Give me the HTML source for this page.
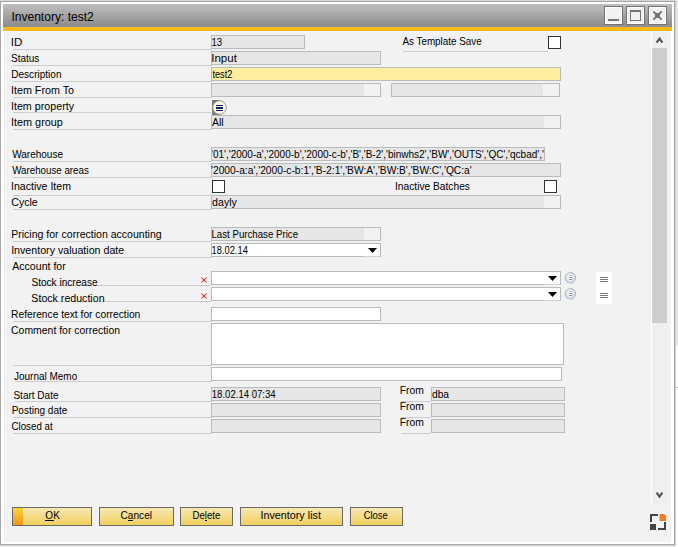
<!DOCTYPE html>
<html><head><meta charset="utf-8"><style>
html,body{margin:0;padding:0;width:678px;height:547px;overflow:hidden;background:#d6d6d6}
svg{display:block}
text{font-family:"Liberation Sans",sans-serif}
</style></head><body>
<svg width="678" height="547" viewBox="0 0 678 547" shape-rendering="crispEdges">
<defs><linearGradient id="tg" x1="0" y1="0" x2="0" y2="1"><stop offset="0" stop-color="#c0c0c0"/><stop offset="1" stop-color="#8c8c8c"/></linearGradient><linearGradient id="bg" x1="0" y1="0" x2="0" y2="1"><stop offset="0" stop-color="#f8e8b4"/><stop offset="1" stop-color="#f0d05c"/></linearGradient><linearGradient id="og" x1="0" y1="0" x2="0" y2="1"><stop offset="0" stop-color="#fcd23a"/><stop offset="1" stop-color="#f2961a"/></linearGradient><radialGradient id="cg" cx="0.5" cy="0.4" r="0.6"><stop offset="0" stop-color="#ffffff"/><stop offset="1" stop-color="#d4dbe8"/></radialGradient></defs>
<rect x="0" y="0" width="678" height="547" fill="#d6d6d6"/>
<rect x="675" y="0" width="1" height="547" fill="#cfcfcf"/>
<rect x="676" y="0" width="2" height="347" fill="#e6e6e6"/>
<rect x="676" y="346" width="2" height="201" fill="#fdfdfd"/>
<rect x="676" y="387" width="2" height="1" fill="#b4b4b4"/>
<rect x="0" y="545" width="676" height="1" fill="#d0d0d0"/>
<rect x="0" y="546" width="676" height="1" fill="#f2f2f2"/>
<rect x="0" y="1" width="675" height="544" fill="#a8a8a8"/>
<rect x="1" y="2" width="673" height="542" fill="#ffffff"/>
<rect x="3" y="4" width="669" height="22" fill="url(#tg)"/>
<rect x="3" y="26" width="669" height="1" fill="#8a929e"/>
<rect x="3" y="27" width="669" height="4" fill="#fdb913"/>
<rect x="4" y="31" width="667" height="511" fill="#f2f2f2"/>
<rect x="4" y="31" width="667" height="1" fill="#f4f6fa"/>
<rect x="3" y="31" width="1" height="511" fill="#ffffff"/>
<text transform="translate(11.4,21) scale(1.005,1.0)" font-size="12.0" fill="#000">Inventory: test2</text>
<rect x="604" y="6" width="19" height="19" fill="#757575"/>
<rect x="605" y="7" width="17" height="17" fill="#ffffff"/>
<rect x="606" y="8" width="15" height="15" fill="#f2f2f2"/>
<rect x="608" y="19" width="11" height="2" fill="#757575"/>
<rect x="626" y="6" width="19" height="19" fill="#757575"/>
<rect x="627" y="7" width="17" height="17" fill="#ffffff"/>
<rect x="628" y="8" width="15" height="15" fill="#f2f2f2"/>
<rect x="630" y="10" width="11" height="11" fill="#757575"/>
<rect x="631" y="12" width="9" height="8" fill="#f2f2f2"/>
<rect x="648" y="6" width="19" height="19" fill="#757575"/>
<rect x="649" y="7" width="17" height="17" fill="#ffffff"/>
<rect x="650" y="8" width="15" height="15" fill="#f2f2f2"/>
<path d="M653.3 11.3 L661.7 19.7 M661.7 11.3 L653.3 19.7" stroke="#757575" stroke-width="1.9" shape-rendering="auto"/>
<rect x="655" y="13" width="5" height="5" fill="#757575"/>
<rect x="13" y="49" width="199" height="1" fill="#cbcccc"/>
<rect x="13" y="65" width="199" height="1" fill="#cbcccc"/>
<rect x="13" y="81" width="199" height="1" fill="#cbcccc"/>
<rect x="13" y="97" width="199" height="1" fill="#cbcccc"/>
<rect x="13" y="129" width="199" height="1" fill="#cbcccc"/>
<rect x="13" y="161" width="199" height="1" fill="#cbcccc"/>
<rect x="13" y="177" width="199" height="1" fill="#cbcccc"/>
<rect x="13" y="195" width="199" height="1" fill="#cbcccc"/>
<rect x="13" y="209" width="199" height="1" fill="#cbcccc"/>
<rect x="13" y="241" width="199" height="1" fill="#cbcccc"/>
<rect x="13" y="257" width="199" height="1" fill="#cbcccc"/>
<rect x="13" y="321" width="199" height="1" fill="#cbcccc"/>
<rect x="13" y="365" width="199" height="1" fill="#cbcccc"/>
<rect x="13" y="417" width="199" height="1" fill="#cbcccc"/>
<rect x="13" y="433" width="199" height="1" fill="#cbcccc"/>
<rect x="13" y="112" width="198" height="1" fill="#cbcccc"/>
<rect x="15" y="381" width="197" height="1" fill="#cbcccc"/>
<rect x="15" y="401" width="197" height="1" fill="#cbcccc"/>
<rect x="32" y="285" width="179" height="1" fill="#cbcccc"/>
<rect x="32" y="301" width="179" height="1" fill="#cbcccc"/>
<rect x="403" y="51" width="145" height="1" fill="#cbcccc"/>
<rect x="401" y="401" width="30" height="1" fill="#cbcccc"/>
<rect x="401" y="417" width="30" height="1" fill="#cbcccc"/>
<rect x="401" y="433" width="30" height="1" fill="#cbcccc"/>
<rect x="211" y="35" width="94" height="14" fill="#b9bcbc"/>
<rect x="212" y="36" width="92" height="12" fill="#e6e6e6"/>
<rect x="211" y="51" width="170" height="14" fill="#b9bcbc"/>
<rect x="212" y="52" width="168" height="12" fill="#e6e6e6"/>
<rect x="211" y="67" width="350" height="14" fill="#b9bcbc"/>
<rect x="212" y="68" width="348" height="12" fill="#ffeea0"/>
<rect x="211" y="83" width="170" height="14" fill="#b9bcbc"/>
<rect x="212" y="84" width="168" height="12" fill="#f2f2f2"/>
<rect x="212" y="84" width="152" height="12" fill="#e6e6e6"/>
<rect x="391" y="83" width="169" height="14" fill="#b9bcbc"/>
<rect x="392" y="84" width="167" height="12" fill="#f2f2f2"/>
<rect x="392" y="84" width="151" height="12" fill="#e6e6e6"/>
<rect x="211" y="115" width="350" height="14" fill="#b9bcbc"/>
<rect x="212" y="116" width="348" height="12" fill="#f2f2f2"/>
<rect x="212" y="116" width="332" height="12" fill="#e6e6e6"/>
<rect x="211" y="147" width="334" height="14" fill="#b9bcbc"/>
<rect x="212" y="148" width="332" height="12" fill="#e6e6e6"/>
<rect x="211" y="163" width="350" height="14" fill="#b9bcbc"/>
<rect x="212" y="164" width="348" height="12" fill="#e6e6e6"/>
<rect x="211" y="195" width="350" height="14" fill="#b9bcbc"/>
<rect x="212" y="196" width="348" height="12" fill="#f2f2f2"/>
<rect x="212" y="196" width="332" height="12" fill="#e6e6e6"/>
<rect x="211" y="227" width="170" height="14" fill="#b9bcbc"/>
<rect x="212" y="228" width="168" height="12" fill="#f2f2f2"/>
<rect x="212" y="228" width="152" height="12" fill="#e6e6e6"/>
<rect x="211" y="243" width="170" height="14" fill="#b9bcbc"/>
<rect x="212" y="244" width="168" height="12" fill="#ffffff"/>
<path d="M368 248 L377 248 L372.5 253 Z" fill="#000" shape-rendering="auto"/>
<rect x="364" y="256" width="16" height="1" fill="#d2d4d4"/>
<rect x="211" y="271" width="350" height="14" fill="#b9bcbc"/>
<rect x="212" y="272" width="348" height="12" fill="#ffffff"/>
<path d="M548 276 L557 276 L552.5 281 Z" fill="#000" shape-rendering="auto"/>
<rect x="211" y="287" width="350" height="14" fill="#b9bcbc"/>
<rect x="212" y="288" width="348" height="12" fill="#ffffff"/>
<path d="M548 292 L557 292 L552.5 297 Z" fill="#000" shape-rendering="auto"/>
<rect x="544" y="284" width="16" height="1" fill="#d2d4d4"/>
<rect x="544" y="300" width="16" height="1" fill="#d2d4d4"/>
<path shape-rendering="auto" d="M201.5 277.5 L206.5 282.5 M206.5 277.5 L201.5 282.5" stroke="#e41a1c" stroke-width="1.05"/>
<path shape-rendering="auto" d="M201.5 293.5 L206.5 298.5 M206.5 293.5 L201.5 298.5" stroke="#e41a1c" stroke-width="1.05"/>
<circle shape-rendering="auto" cx="570.4" cy="277.8" r="5.2" fill="url(#cg)" stroke="#aab2c0" stroke-width="1"/>
<rect x="569" y="275" width="3" height="1" fill="#c4c8d0"/>
<rect x="569" y="277" width="3" height="1" fill="#959aa3"/>
<rect x="569" y="279" width="3" height="1" fill="#959aa3"/>
<rect x="572" y="277" width="1" height="1" fill="#c0c4cc"/>
<rect x="572" y="279" width="1" height="1" fill="#c0c4cc"/>
<circle shape-rendering="auto" cx="570.4" cy="293.8" r="5.2" fill="url(#cg)" stroke="#aab2c0" stroke-width="1"/>
<rect x="569" y="291" width="3" height="1" fill="#c4c8d0"/>
<rect x="569" y="293" width="3" height="1" fill="#959aa3"/>
<rect x="569" y="295" width="3" height="1" fill="#959aa3"/>
<rect x="572" y="293" width="1" height="1" fill="#c0c4cc"/>
<rect x="572" y="295" width="1" height="1" fill="#c0c4cc"/>
<rect x="596" y="272" width="16" height="32" fill="#ffffff"/>
<rect x="600" y="277" width="8" height="1" fill="#7a7a7a"/>
<rect x="600" y="279" width="8" height="1" fill="#7a7a7a"/>
<rect x="600" y="281" width="8" height="1" fill="#7a7a7a"/>
<rect x="600" y="293" width="8" height="1" fill="#7a7a7a"/>
<rect x="600" y="295" width="8" height="1" fill="#7a7a7a"/>
<rect x="600" y="297" width="8" height="1" fill="#7a7a7a"/>
<rect x="211" y="307" width="170" height="14" fill="#b9bcbc"/>
<rect x="212" y="308" width="168" height="12" fill="#ffffff"/>
<rect x="211" y="323" width="353" height="42" fill="#b9bcbc"/>
<rect x="212" y="324" width="351" height="40" fill="#ffffff"/>
<rect x="211" y="367" width="351" height="14" fill="#b9bcbc"/>
<rect x="212" y="368" width="349" height="12" fill="#ffffff"/>
<rect x="211" y="387" width="170" height="14" fill="#b9bcbc"/>
<rect x="212" y="388" width="168" height="12" fill="#e6e6e6"/>
<rect x="211" y="403" width="170" height="14" fill="#b9bcbc"/>
<rect x="212" y="404" width="168" height="12" fill="#e6e6e6"/>
<rect x="211" y="419" width="170" height="14" fill="#b9bcbc"/>
<rect x="212" y="420" width="168" height="12" fill="#e6e6e6"/>
<rect x="431" y="387" width="134" height="14" fill="#b9bcbc"/>
<rect x="432" y="388" width="132" height="12" fill="#e6e6e6"/>
<rect x="431" y="403" width="134" height="14" fill="#b9bcbc"/>
<rect x="432" y="404" width="132" height="12" fill="#e6e6e6"/>
<rect x="431" y="419" width="134" height="14" fill="#b9bcbc"/>
<rect x="432" y="420" width="132" height="12" fill="#e6e6e6"/>
<rect x="548" y="36" width="13" height="13" fill="#333333"/>
<rect x="549" y="37" width="11" height="11" fill="#ffffff"/>
<rect x="212" y="180" width="13" height="13" fill="#333333"/>
<rect x="213" y="181" width="11" height="11" fill="#ffffff"/>
<rect x="544" y="180" width="13" height="13" fill="#333333"/>
<rect x="545" y="181" width="11" height="11" fill="#ffffff"/>
<rect x="212" y="100" width="8" height="15" fill="#7a7a7a"/>
<circle shape-rendering="auto" cx="219.5" cy="107.5" r="6.8" fill="#f7f5e4" stroke="#9a9a90" stroke-width="1"/>
<rect x="216" y="105" width="7" height="1" fill="#0b2160"/>
<rect x="216" y="107" width="7" height="2" fill="#0b2160"/>
<rect x="216" y="110" width="7" height="1" fill="#0b2160"/>
<text transform="translate(10.79,46) scale(1.12,1.0)" font-size="10.3" fill="#000">ID</text>
<text transform="translate(11.03,62) scale(0.9714,1.0)" font-size="10.3" fill="#000">Status</text>
<text transform="translate(11.22,78) scale(0.978,1.0)" font-size="10.3" fill="#000">Description</text>
<text transform="translate(10.95,94) scale(1.0458,1.0)" font-size="10.3" fill="#000">Item From To</text>
<text transform="translate(10.96,110) scale(1.04,1.0)" font-size="10.3" fill="#000">Item property</text>
<text transform="translate(10.94,126) scale(1.0563,1.0)" font-size="10.3" fill="#000">Item group</text>
<text transform="translate(12.25,158) scale(0.9702,1.0)" font-size="10.3" fill="#000">Warehouse</text>
<text transform="translate(12.25,174) scale(0.9475,1.0)" font-size="10.3" fill="#000">Warehouse areas</text>
<text transform="translate(10.97,190) scale(1.0298,1.0)" font-size="10.3" fill="#000">Inactive Item</text>
<text transform="translate(11.22,206) scale(1.0312,1.0)" font-size="10.3" fill="#000">Cycle</text>
<text transform="translate(11.18,238) scale(1.0248,1.0)" font-size="10.3" fill="#000">Pricing for correction accounting</text>
<text transform="translate(11.16,254) scale(1.0352,1.0)" font-size="10.3" fill="#000">Inventory valuation date</text>
<text transform="translate(12.2,270) scale(1.0308,1.0)" font-size="10.3" fill="#000">Account for</text>
<text transform="translate(31.42,286) scale(0.9818,1.0)" font-size="10.3" fill="#000">Stock increase</text>
<text transform="translate(31.37,302) scale(1.0319,1.0)" font-size="10.3" fill="#000">Stock reduction</text>
<text transform="translate(11.1,318) scale(0.9953,1.0)" font-size="10.3" fill="#000">Reference text for correction</text>
<text transform="translate(11.09,334) scale(1.0132,1.0)" font-size="10.3" fill="#000">Comment for correction</text>
<text transform="translate(14.0,380) scale(0.9692,1.0)" font-size="10.3" fill="#000">Journal Memo</text>
<text transform="translate(13.43,399) scale(0.9733,1.0)" font-size="10.3" fill="#000">Start Date</text>
<text transform="translate(11.63,414) scale(0.9732,1.0)" font-size="10.3" fill="#000">Posting date</text>
<text transform="translate(11.45,430) scale(0.9488,1.0)" font-size="10.3" fill="#000">Closed at</text>
<text transform="translate(402.4,45) scale(0.9585,1.0)" font-size="10.3" fill="#000">As Template Save</text>
<text transform="translate(395.01,190) scale(0.9919,1.0)" font-size="10.3" fill="#000">Inactive Batches</text>
<text transform="translate(399.7,394) scale(1.0043,1.0)" font-size="10.3" fill="#000">From</text>
<text transform="translate(399.7,410) scale(1.0043,1.0)" font-size="10.3" fill="#000">From</text>
<text transform="translate(399.7,426) scale(1.0043,1.0)" font-size="10.3" fill="#000">From</text>
<text transform="translate(211.47,46) scale(0.93,1.0)" font-size="10.3" fill="#000">13</text>
<text transform="translate(211.28,62) scale(1.1182,1.0)" font-size="10.3" fill="#000">Input</text>
<text transform="translate(212.4,78) scale(0.9,1.0)" font-size="10.3" fill="#000">test2</text>
<text transform="translate(212.0,126) scale(1.0182,1.0)" font-size="10.3" fill="#000">All</text>
<text transform="translate(212.1,206) scale(1.0292,1.0)" font-size="10.3" fill="#000">dayly</text>
<text transform="translate(211.46,238) scale(0.9407,1.0)" font-size="10.3" fill="#000">Last Purchase Price</text>
<text transform="translate(211.49,254) scale(0.9077,1.0)" font-size="10.3" fill="#000">18.02.14</text>
<text transform="translate(211.77,398) scale(0.9299,1.0)" font-size="10.3" fill="#000">18.02.14 07:34</text>
<text transform="translate(432.0,398) scale(0.9941,1.0)" font-size="10.3" fill="#000">dba</text>
<text transform="translate(211.0,174) scale(0.9954,1.0)" font-size="10.3" fill="#000">'2000-a:a','2000-c-b:1','B-2:1','BW:A','BW:B','BW:C','QC:a'</text>
<clipPath id="whc"><rect x="212" y="148" width="332" height="12"/></clipPath>
<g clip-path="url(#whc)"><text transform="translate(211.0,158) scale(0.973,1.0)" font-size="10.3" fill="#000">'01','2000-a','2000-b','2000-c-b','B','B-2','binwhs2','BW','OUTS','QC','qcbad','QC'</text></g>
<rect x="12" y="507" width="80" height="19" fill="#6a6a6a"/>
<rect x="13" y="508" width="78" height="17" fill="#f4df90"/>
<rect x="13" y="508" width="78" height="17" fill="url(#bg)"/>
<rect x="13" y="508" width="10" height="17" fill="url(#og)"/>
<rect x="99" y="507" width="75" height="19" fill="#6a6a6a"/>
<rect x="100" y="508" width="73" height="17" fill="#f4df90"/>
<rect x="100" y="508" width="73" height="17" fill="url(#bg)"/>
<rect x="180" y="507" width="53" height="19" fill="#6a6a6a"/>
<rect x="181" y="508" width="51" height="17" fill="#f4df90"/>
<rect x="181" y="508" width="51" height="17" fill="url(#bg)"/>
<rect x="240" y="507" width="103" height="19" fill="#6a6a6a"/>
<rect x="241" y="508" width="101" height="17" fill="#f4df90"/>
<rect x="241" y="508" width="101" height="17" fill="url(#bg)"/>
<rect x="350" y="507" width="53" height="19" fill="#6a6a6a"/>
<rect x="351" y="508" width="51" height="17" fill="#f4df90"/>
<rect x="351" y="508" width="51" height="17" fill="url(#bg)"/>
<text transform="translate(45.3,519) scale(0.9786,1.0)" font-size="10.3" fill="#000">OK</text>
<text transform="translate(120.52,519) scale(0.9833,1.0)" font-size="10.3" fill="#000">Cancel</text>
<text transform="translate(192.56,519) scale(0.9357,1.0)" font-size="10.3" fill="#000">Delete</text>
<text transform="translate(260.45,519) scale(1.0474,1.0)" font-size="10.3" fill="#000">Inventory list</text>
<text transform="translate(363.68,519) scale(0.92,1.0)" font-size="10.3" fill="#000">Close</text>
<rect x="45" y="520" width="9" height="1" fill="#000"/>
<rect x="128" y="520" width="5" height="1" fill="#000"/>
<rect x="205" y="520" width="2" height="1" fill="#000"/>
<rect x="651" y="32" width="1" height="472" fill="#ffffff"/>
<rect x="652" y="32" width="16" height="472" fill="#efefef"/>
<rect x="652" y="48" width="15" height="275" fill="#cdcdcd"/>
<path d="M656.6 42.6 L659.5 38.6 L662.4 42.6" stroke="#555" stroke-width="2.2" fill="none" shape-rendering="auto"/>
<path d="M656.6 492.6 L659.5 496.6 L662.4 492.6" stroke="#555" stroke-width="2.2" fill="none" shape-rendering="auto"/>
<rect x="650" y="514" width="8" height="2" fill="#444"/>
<rect x="650" y="514" width="2" height="8" fill="#444"/>
<path shape-rendering="auto" d="M659.5 514 H663 Q666 514 666 517 V521 H659.5 Z" fill="#f47b20"/>
<rect x="650" y="524" width="6" height="6" fill="#444"/>
<rect x="664" y="522" width="2" height="8" fill="#444"/>
<rect x="658" y="528" width="8" height="2" fill="#444"/>
</svg>
</body></html>
